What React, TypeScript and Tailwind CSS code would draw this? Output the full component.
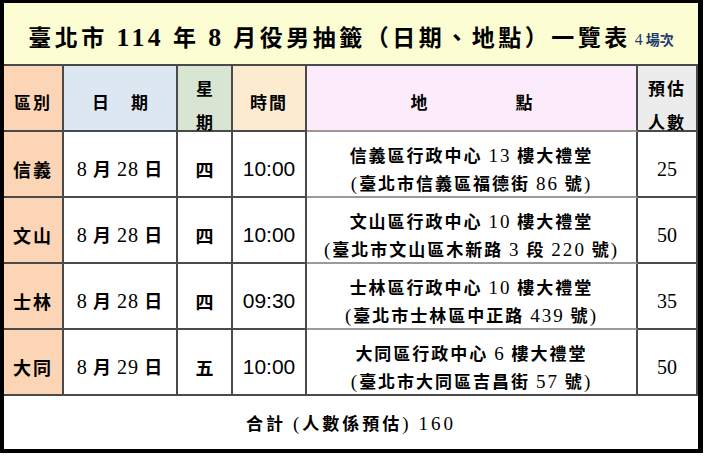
import React from 'react';

// mixed text: Chinese in bold sans, digits/brackets in serif
const Mixed: React.FC<{ text: string; boldDigits?: boolean }> = ({ text, boldDigits }) => (
  <span>
    {text.split(/([\d()]+)/).map((part, i) =>
      /^[\d()]+$/.test(part) ? (
        <span
          key={i}
          className={`font-['Liberation_Serif',serif] text-[1.12em] ${boldDigits ? 'font-bold' : 'font-normal'}`}
        >
          {part}
        </span>
      ) : (
        <span key={i} className="whitespace-pre">{part}</span>
      )
    )}
  </span>
);

const rows = [
  { district: '信義', date: '8 月 28 日', weekday: '四', time: '10:00', place: '信義區行政中心 13 樓大禮堂', addr: '(臺北市信義區福德街 86 號)', count: '25' },
  { district: '文山', date: '8 月 28 日', weekday: '四', time: '10:00', place: '文山區行政中心 10 樓大禮堂', addr: '(臺北市文山區木新路 3 段 220 號)', count: '50' },
  { district: '士林', date: '8 月 28 日', weekday: '四', time: '09:30', place: '士林區行政中心 10 樓大禮堂', addr: '(臺北市士林區中正路 439 號)', count: '35' },
  { district: '大同', date: '8 月 29 日', weekday: '五', time: '10:00', place: '大同區行政中心 6 樓大禮堂', addr: '(臺北市大同區吉昌街 57 號)', count: '50' },
];

const cell = 'flex items-center justify-center border-r-2 border-b-2 border-[#4a4a4a]';

export default function App() {
  return (
    <div className="w-[710px] h-[461px] bg-white text-black font-['Noto_Sans_CJK_TC',sans-serif] font-bold">
      <div className="w-[703px] h-[453px] flex flex-col border-black border-t-[3px] border-l-[4px] border-r-[5px] border-b-[4px]">
        {/* title */}
        <div className="h-[63px] shrink-0 flex items-center justify-center pt-[9px] bg-[#fdfdd3] border-b-2 border-[#4a4a4a]">
          <span className="text-[23px] tracking-[3.5px] leading-none">
            <Mixed text="臺北市 114 年 8 月役男抽籤（日期、地點）一覽表" boldDigits />
          </span>
          <span className="ml-[4px] text-[14px] leading-none text-[#1f3a70] mt-[3px]">
            <Mixed text="4 場次" />
          </span>
        </div>

        <div className="grid grid-cols-[60px_114px_55px_74px_331px_60px] grid-rows-[66px_66px_66px_66px_66px] shrink-0">
          {/* header */}
          <div className={`${cell} bg-[#fbd5b5] pt-[8px] text-[17px] tracking-[2px]`}>區別</div>
          <div className={`${cell} bg-[#dde7f2] pt-[8px] text-[17px] gap-[22px]`}>
            <span>日</span>
            <span>期</span>
          </div>
          <div className={`${cell} bg-[#d9e5d3] pt-[14px] text-[17px] flex-col leading-[34px]`}>
            <span>星</span>
            <span>期</span>
          </div>
          <div className={`${cell} bg-[#fdebd0] pt-[8px] text-[17px] tracking-[2px]`}>時間</div>
          <div className={`${cell} bg-[#fcebfb] pt-[8px] text-[17px] gap-[88px] border-b-[#9a9a9a]`}>
            <span>地</span>
            <span>點</span>
          </div>
          <div className={`${cell} border-r-0 bg-[#ececec] pt-[14px] text-[17px] tracking-[2px] flex-col leading-[34px]`}>
            <span>預估</span>
            <span>人數</span>
          </div>

          {rows.map((r, i) => (
            <React.Fragment key={r.district}>
              <div className={`${cell} bg-[#fbd5b5] pt-[10px] text-[18px] tracking-[2px]`}>{r.district}</div>
              <div className={`${cell} pt-[10px] text-[18px] tracking-[1px]`}>
                <Mixed text={r.date} />
              </div>
              <div className={`${cell} pt-[10px] text-[18px]`}>{r.weekday}</div>
              <div className={`${cell} pt-[10px] text-[21px] font-normal font-['Liberation_Sans',sans-serif]`}>{r.time}</div>
              <div
                className={`${cell} pt-[10px] flex-col text-[17px] tracking-[2px] leading-[27px] ${
                  i < rows.length - 1 ? 'border-b-[#9a9a9a]' : ''
                }`}
              >
                <Mixed text={r.place} />
                <Mixed text={r.addr} />
              </div>
              <div className={`${cell} border-r-0 pt-[10px] text-[20px] font-normal font-['Liberation_Serif',serif]`}>
                {r.count}
              </div>
            </React.Fragment>
          ))}
        </div>

        {/* total */}
        <div className="flex-1 flex items-center justify-center pt-[4px] text-[17px] tracking-[3px]">
          <Mixed text="合計 (人數係預估) 160" />
        </div>
      </div>
    </div>
  );
}
